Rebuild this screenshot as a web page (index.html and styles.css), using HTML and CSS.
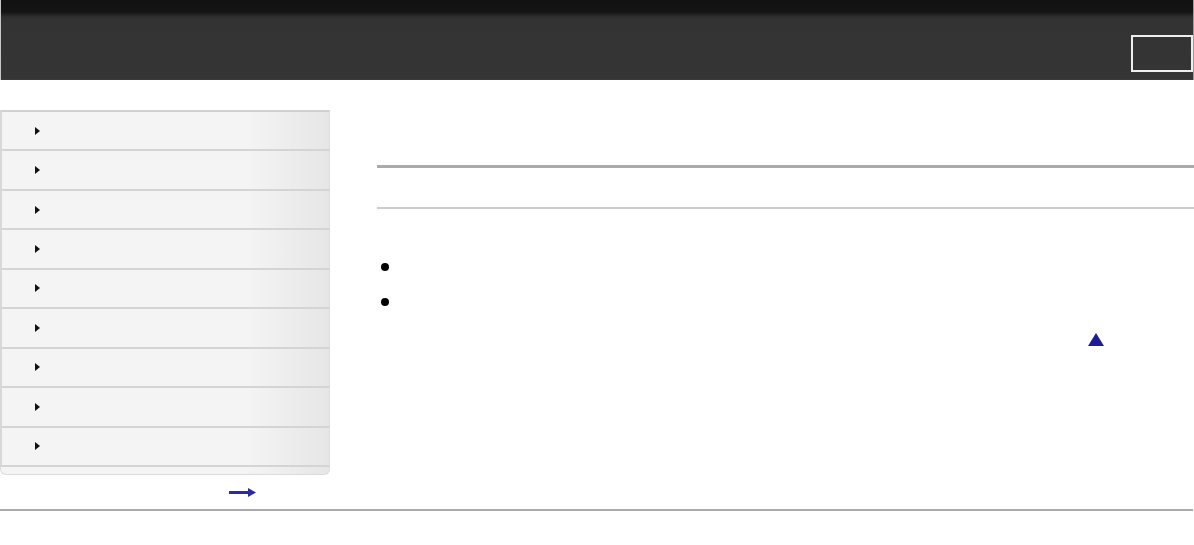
FILE: index.html
```html
<!DOCTYPE html>
<html lang="en">
<head>
<meta charset="UTF-8">
<title>Help Guide</title>
<link rel="stylesheet" href="styles.css">
</head>
<body>

<div class="header">
  <div class="header-box"></div>
</div>

<div class="page">
  <div class="sidebar">
    <ul class="menu">
      <li><span class="caret"></span></li>
      <li><span class="caret"></span></li>
      <li><span class="caret"></span></li>
      <li><span class="caret"></span></li>
      <li><span class="caret"></span></li>
      <li><span class="caret"></span></li>
      <li><span class="caret"></span></li>
      <li><span class="caret"></span></li>
      <li><span class="caret"></span></li>
    </ul>
    <div class="menu-foot"></div>
    <div class="next-link">
      <svg width="27" height="9" viewBox="0 0 27 9"><path d="M0 3h19V0l8 4.5-8 4.5V6H0z" fill="#2b2ba3"/></svg>
    </div>
  </div>

  <div class="main">
    <div class="rule-top"></div>
    <div class="rule-sub"></div>
    <ul class="points">
      <li></li>
      <li></li>
    </ul>
    <div class="to-top">
      <svg width="16" height="13" viewBox="0 0 16 13"><path d="M8 0L16 13H0z" fill="#1c1c99"/></svg>
    </div>
  </div>
</div>

<div class="footer-rule"></div>

</body>
</html>
```
FILE: styles.css
```css
body {
  margin: 0;
  padding: 0;
  background: #fff;
  font-family: 'Liberation Sans', Arial, sans-serif;
}
.header {
  height: 80px;
  background: linear-gradient(#121212 0, #141414 12px, #2f2f2f 17px, #333 21px, #353535 78px, #3c3c3c 80px);
  border-left: 1px solid #c8c8c8;
  border-right: 1px solid #9a9a9a;
  display: flex;
  justify-content: flex-end;
  align-items: flex-start;
}
.header-box {
  width: 58px;
  height: 33px;
  margin-top: 35px;
  border: 2px solid #eee;
}
.page {
  display: flex;
  margin-top: 30px;
  height: 399px;
}
.sidebar {
  width: 330px;
  flex-shrink: 0;
}
.menu {
  list-style: none;
  margin: 0;
  padding: 0;
  border-bottom: 2px solid #d4d4d4;
}
.menu li {
  height: 37.45px;
  border-top: 2px solid #d4d4d4;
  border-left: 2px solid #d8d8d8;
  border-right: 1px solid #dcdcdc;
  background: linear-gradient(90deg, #f4f4f4 0, #f4f4f4 75%, #e6e6e6 100%);
  display: flex;
  align-items: center;
}
.menu li:first-child {
  border-top-color: #d0d0d0;
}
.caret {
  width: 0;
  height: 0;
  margin-left: 33px;
  border-top: 4px solid transparent;
  border-bottom: 4px solid transparent;
  border-left: 5px solid #111;
}
.menu-foot {
  height: 7px;
  border: 1px solid #dcdcdc;
  border-top: none;
  border-radius: 0 0 6px 6px;
  background: linear-gradient(90deg, #f4f4f4 0, #f4f4f4 75%, #e6e6e6 100%);
}
.next-link {
  margin-top: 13px;
  padding-left: 229px;
  line-height: 0;
}
.main {
  flex: 1;
  margin-left: 47px;
  padding-top: 55px;
}
.rule-top {
  height: 3px;
  background: #aaa;
}
.rule-sub {
  height: 2px;
  margin-top: 39px;
  background: #ccc;
}
.points {
  list-style: none;
  margin: 54px 0 0 0;
  padding: 0;
}
.points li {
  height: 35px;
  display: flex;
  align-items: flex-start;
}
.points li::before {
  content: "";
  width: 8px;
  height: 8px;
  margin-left: 4px;
  border-radius: 50%;
  background: #000;
}
.to-top {
  margin-top: 0;
  padding-left: 711px;
  line-height: 0;
}
.footer-rule {
  height: 2px;
  background: #aaa;
  margin-right: 1px;
}
```
